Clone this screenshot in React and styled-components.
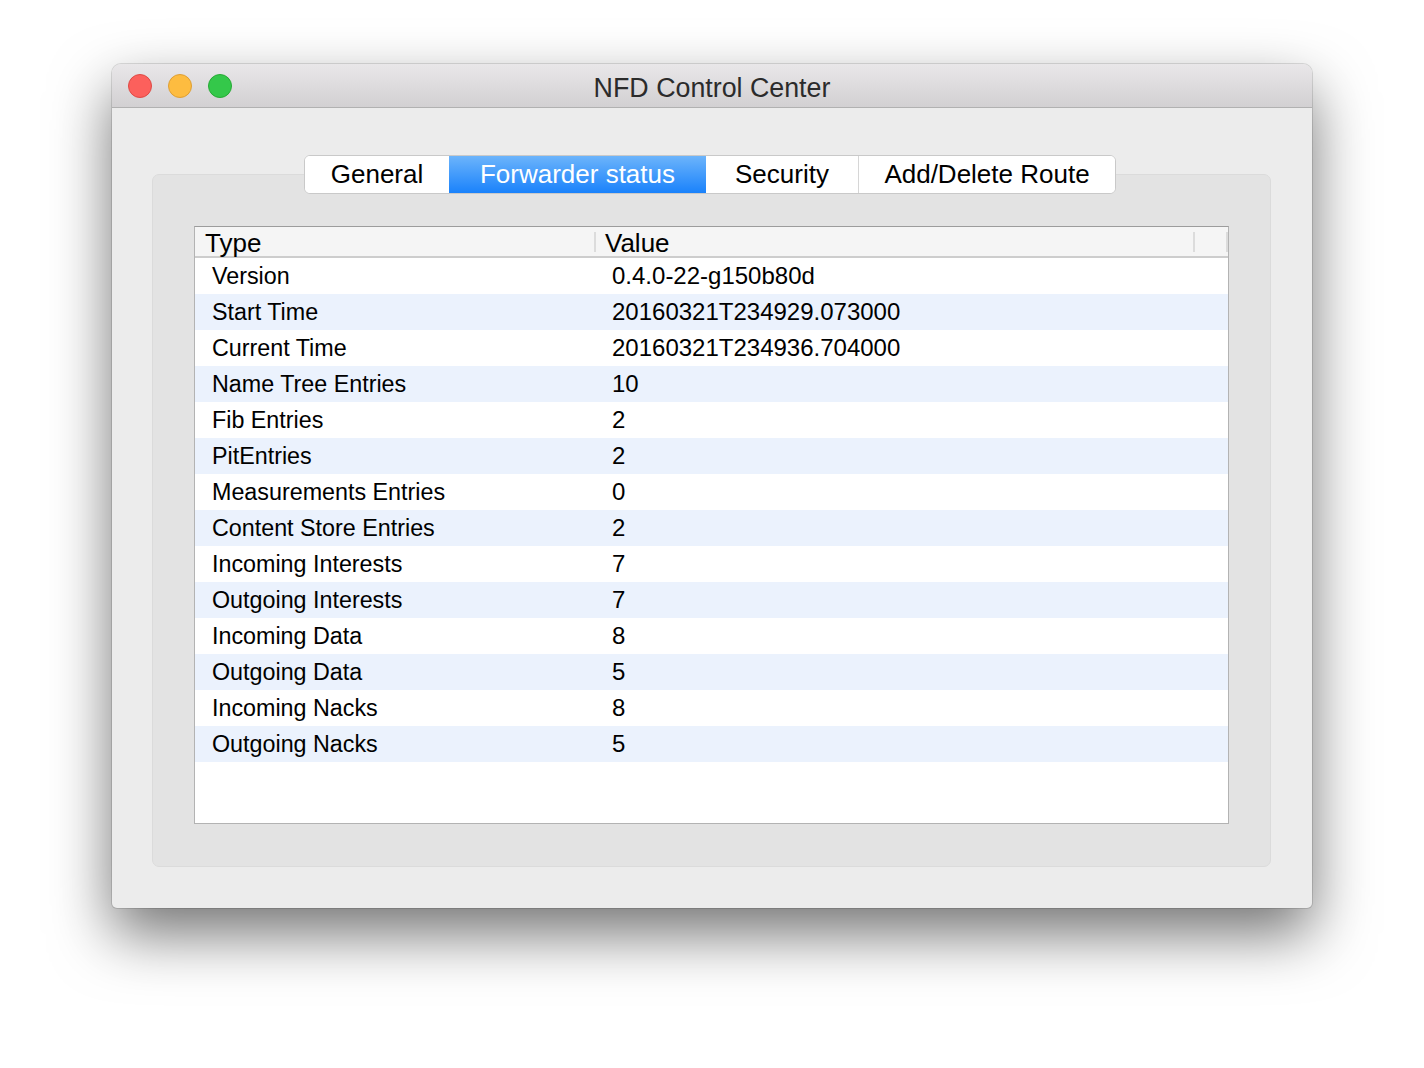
import React from "react";
import styled, {createGlobalStyle} from "styled-components";

const GlobalStyle = createGlobalStyle`
  html, body {
    margin: 0;
    padding: 0;
    background: #ffffff;
    font-family: "Liberation Sans", Arial, sans-serif;
  }
`

const Desktop = styled.div`
  width: 1424px;
  height: 1068px;
  padding: 64px 112px 0 112px;
  box-sizing: border-box;
`
const Window = styled.div`
  width: 1200px;
  height: 844px;
  display: flex;
  flex-direction: column;
  background: #ececec;
  border-radius: 9px 9px 5px 5px;
  box-shadow: 0 0 0 1px rgba(0,0,0,0.12), 0 26px 60px rgba(0,0,0,0.55);
  overflow: hidden;
`
const TitleBar = styled.div`
  height: 43px;
  display: flex;
  align-items: center;
  position: relative;
  background: linear-gradient(#e9e7e9, #d2d0d2);
  border-bottom: 1px solid #b1b1b1;
  flex-shrink: 0;
`
const Lights = styled.div`
  display: flex;
  gap: 16px;
  padding-left: 16px;
`
const Light = styled.span`
  width: 24px;
  height: 24px;
  border-radius: 50%;
  background: ${p => p.$color};
  border: 1px solid ${p => p.$edge};
  box-sizing: border-box;
`
const Title = styled.div`
  position: absolute;
  left: 0;
  right: 0;
  top: 9px;
  text-align: center;
  font-size: 26.8px;
  color: #2b2b2b;
  pointer-events: none;
`
const Body = styled.div`
  flex: 1;
  padding: 47px 41px 41px 40px;
  display: flex;
  flex-direction: column;
`
const TabBar = styled.div`
  display: flex;
  justify-content: center;
  padding-right: 3px;
  position: relative;
  z-index: 1;
`
const TabGroup = styled.div`
  display: flex;
  height: 39px;
  border: 1px solid #c9c9c9;
  border-radius: 6px;
  overflow: hidden;
  background: #ffffff;
  box-sizing: border-box;
`
const Tab = styled.div`
  width: ${p => p.$w}px;
  display: flex;
  align-items: center;
  justify-content: center;
  font-size: 26px;
  color: ${p => p.$active ? "#ffffff" : "#000000"};
  background: ${p => p.$active ? "linear-gradient(#6cb4fb, #1a82fb)" : "#ffffff"};
  border-left: ${p => p.$first || p.$active || p.$afterActive ? "none" : "1px solid #d6d6d6"};
  box-sizing: border-box;
`
const Pane = styled.div`
  flex: 1;
  margin-top: -20px;
  background: #e3e3e3;
  border: 1px solid #dbdbdb;
  border-radius: 7px;
  padding: 51px 41px 42px 41px;
  display: flex;
  flex-direction: column;
`
const Table = styled.div`
  flex: 1;
  background: #ffffff;
  border: 1px solid #b3b3b3;
  border-top-color: #9c9c9c;
  display: flex;
  flex-direction: column;
`
const HeaderRow = styled.div`
  display: grid;
  grid-template-columns: 401px 599px 1fr;
  height: 29px;
  background: #f5f5f5;
  border-bottom: 2px solid #cdcdcd;
`
const HeaderCell = styled.div`
  display: flex;
  align-items: center;
  padding-left: ${p => p.$pad}px;
  font-size: 26px;
  color: #000;
  position: relative;
  line-height: 29px;
  padding-top: 2px;
  &:after {
    content: "";
    position: absolute;
    right: 0;
    top: 5px;
    height: 20px;
    width: 2px;
    background: ${p => p.$sep ? "#dcdcdc" : "transparent"};
  }
`
const Row = styled.div`
  display: grid;
  grid-template-columns: 401px 1fr;
  height: 36px;
  align-items: center;
  background: ${p => p.$alt ? "#ebf2fd" : "#ffffff"};
  color: #000;
`
const Cell = styled.div`
  padding-left: ${p => p.$pad}px;
  font-size: ${p => p.$size}px;
  white-space: nowrap;
`

const rows = [
    ["Version", "0.4.0-22-g150b80d"],
    ["Start Time", "20160321T234929.073000"],
    ["Current Time", "20160321T234936.704000"],
    ["Name Tree Entries", "10"],
    ["Fib Entries", "2"],
    ["PitEntries", "2"],
    ["Measurements Entries", "0"],
    ["Content Store Entries", "2"],
    ["Incoming Interests", "7"],
    ["Outgoing Interests", "7"],
    ["Incoming Data", "8"],
    ["Outgoing Data", "5"],
    ["Incoming Nacks", "8"],
    ["Outgoing Nacks", "5"],
]

const tabs = [
    {label: "General", w: 144},
    {label: "Forwarder status", w: 257, active: true},
    {label: "Security", w: 152},
    {label: "Add/Delete Route", w: 257},
]

const App = () => {
    return (
        <Desktop>
            <GlobalStyle/>
            <Window>
                <TitleBar>
                    <Lights>
                        <Light $color="#fc605c" $edge="#de4a45"/>
                        <Light $color="#fdbc40" $edge="#de9f34"/>
                        <Light $color="#34c84a" $edge="#27aa35"/>
                    </Lights>
                    <Title>NFD Control Center</Title>
                </TitleBar>
                <Body>
                    <TabBar>
                        <TabGroup>
                            {tabs.map((t, i) => (
                                <Tab key={t.label} $w={t.w} $active={t.active} $first={i === 0}
                                     $afterActive={i > 0 && tabs[i - 1].active}>
                                    {t.label}
                                </Tab>
                            ))}
                        </TabGroup>
                    </TabBar>
                    <Pane>
                        <Table>
                            <HeaderRow>
                                <HeaderCell $pad={10} $sep>Type</HeaderCell>
                                <HeaderCell $pad={9} $sep>Value</HeaderCell>
                                <HeaderCell $pad={0} $sep/>
                            </HeaderRow>
                            {rows.map(([k, v], i) => (
                                <Row key={k} $alt={i % 2 === 1}>
                                    <Cell $pad={17} $size={23.3}>{k}</Cell>
                                    <Cell $pad={16} $size={24}>{v}</Cell>
                                </Row>
                            ))}
                        </Table>
                    </Pane>
                </Body>
            </Window>
        </Desktop>
    );
}

export default App;
